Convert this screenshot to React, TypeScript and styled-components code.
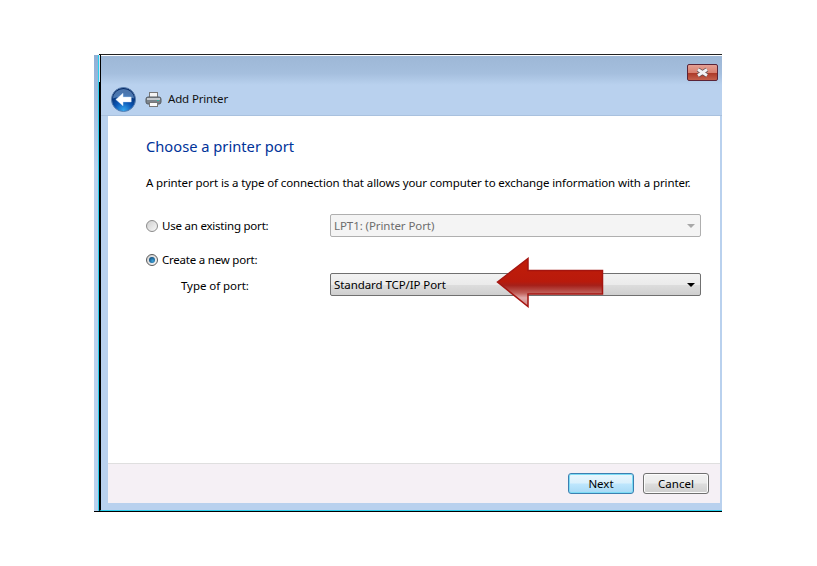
import React from "react";
import styled, { createGlobalStyle } from "styled-components";

const Global = createGlobalStyle`
  html, body { margin: 0; padding: 0; background: #fff; }
  body { font-family: "Noto Sans", "Open Sans", sans-serif; font-size: 12px; color: #000; }
`;

const Page = styled.div`
  width: 817px;
  height: 566px;
  padding: 54px 0 0 94px;
  box-sizing: border-box;
  background: #fff;
  overflow: hidden;
`;

const Frame = styled.div`
  position: relative;
  display: flex;
  width: 628px;
  height: 458px;
  border-bottom: 1px solid #000;
  box-sizing: border-box;
`;

const Strip = styled.div`
  width: 5px;
  margin-top: 1px;
  box-sizing: border-box;
  background: linear-gradient(#8fb0d6, #b9d1ee 25%);
  border-right: 1px solid #2bd0ee;
`;

const Window = styled.div`
  position: relative;
  flex: 1;
  display: flex;
  flex-direction: column;
  border-left: 2px solid #000;
  border-top: 1px solid #222;
  border-bottom: 1px solid #2bd0ee;
  background: #b9d1ee;
  box-sizing: border-box;
  &::before {
    content: "";
    position: absolute;
    left: -2px;
    top: 0;
    width: 1px;
    height: 27px;
    background: #d8e4f2;
  }
`;

const Caption = styled.div`
  display: flex;
  justify-content: flex-end;
  height: 30px;
  padding: 8px 4px 0 0;
  box-sizing: border-box;
  border-top: 1px solid #fff;
  background: linear-gradient(#9db7d6, #a5bfde 60%, #b9d1ee);
`;

const CloseButton = styled.div`
  display: flex;
  align-items: center;
  justify-content: center;
  width: 31px;
  height: 17px;
  box-sizing: border-box;
  border: 1px solid #5a2438;
  border-radius: 2px;
  background: linear-gradient(#e4a094, #d8806f 50%, #ad3a28 56%, #c4604c);
`;

const NavBar = styled.div`
  display: flex;
  align-items: center;
  height: 31px;
  padding: 0 0 2px 10px;
  box-sizing: border-box;
  border-bottom: 1px solid #a9c1de;
`;

const BackIcon = styled.svg`
  width: 25px;
  height: 25px;
  margin-right: 9px;
`;

const PrinterIcon = styled.svg`
  width: 17px;
  height: 17px;
  margin-right: 6px;
`;

const NavTitle = styled.span`
  padding-bottom: 1px;
  font-size: 11.5px;
  letter-spacing: -0.15px;
  color: #111;
`;

const Body = styled.div`
  flex: 1;
  display: flex;
  flex-direction: column;
  margin: 0 2px 7px 7px;
  background: #fff;
`;

const Content = styled.div`
  flex: 1;
  padding: 19px 19px 0 38px;
`;

const Heading = styled.h1`
  margin: 0 0 18px;
  font-size: 14.7px;
  line-height: 22px;
  font-weight: 400;
  color: #003399;
`;

const Intro = styled.p`
  margin: 0 0 23px;
  font-size: 11.5px;
  line-height: 16px;
  letter-spacing: -0.11px;
  white-space: nowrap;
`;

const Row = styled.div<{ $mb: number }>`
  display: flex;
  align-items: center;
  height: 23px;
  margin-bottom: ${(p) => p.$mb}px;
`;

const RadioLabel = styled.label`
  display: flex;
  align-items: center;
  gap: 4px;
  width: 184px;
  font-size: 11.5px;
  line-height: 16px;
  letter-spacing: -0.22px;
`;

const Radio = styled.span<{ $on?: boolean }>`
  display: flex;
  align-items: center;
  justify-content: center;
  width: 12px;
  height: 12px;
  box-sizing: border-box;
  border: 1px solid ${(p) => (p.$on ? "#5a5a5a" : "#8b8b8b")};
  border-radius: 50%;
  background: linear-gradient(135deg, #cfcfcf, #f8f8f8);
  &::after {
    content: "";
    display: ${(p) => (p.$on ? "block" : "none")};
    width: 6px;
    height: 6px;
    border-radius: 50%;
    background: radial-gradient(circle at 60% 65%, #3fa3d8, #0f4e80 75%);
  }
`;

const PlainLabel = styled.span`
  width: 149px;
  margin-left: 35px;
  padding-top: 2px;
  font-size: 11.5px;
  line-height: 16px;
  letter-spacing: -0.05px;
`;

const Combo = styled.div<{ $disabled?: boolean }>`
  display: flex;
  flex: 1;
  align-items: center;
  justify-content: space-between;
  height: 23px;
  padding: 0 5px 0 3px;
  box-sizing: border-box;
  border: 1px solid ${(p) => (p.$disabled ? "#afafaf" : "#707070")};
  border-radius: 2px;
  font-size: 11.5px;
  letter-spacing: -0.08px;
  color: ${(p) => (p.$disabled ? "#6d6d6d" : "#000")};
  background: ${(p) =>
    p.$disabled ? "#f4f4f4" : "linear-gradient(#f2f2f2, #ebebeb 50%, #dddddd 52%, #cfcfcf)"};
`;

const Caret = styled.span<{ $disabled?: boolean }>`
  width: 0;
  height: 0;
  border-left: 4px solid transparent;
  border-right: 4px solid transparent;
  border-top: 4px solid ${(p) => (p.$disabled ? "#a8a8a8" : "#000")};
`;

const Footer = styled.div`
  display: flex;
  justify-content: flex-end;
  gap: 9px;
  height: 40px;
  padding: 9px 11px 0 0;
  box-sizing: border-box;
  border-top: 1px solid #dfdfdf;
  background: #f5f0f5;
`;

const Button = styled.div<{ $primary?: boolean }>`
  display: flex;
  align-items: center;
  justify-content: center;
  width: 66px;
  height: 21px;
  box-sizing: border-box;
  border: 1px solid ${(p) => (p.$primary ? "#3c7fb1" : "#707070")};
  border-radius: 3px;
  font-size: 11.5px;
  background: ${(p) =>
    p.$primary
      ? "linear-gradient(#eaf6fd, #d9f0fc 48%, #bee6fd 52%, #a7d9f5)"
      : "linear-gradient(#f2f2f2, #ebebeb 48%, #dddddd 52%, #cfcfcf)"};
  box-shadow: inset 0 0 0 1px ${(p) => (p.$primary ? "#7ddcf5" : "#fcfcfc")};
`;

const Arrow = styled.svg`
  position: absolute;
  left: 402px;
  top: 203px;
  width: 108px;
  height: 51px;
`;

export default function App() {
  return (
    <Page>
      <Global />
      <Frame>
        <Strip />
        <Window>
          <Caption>
            <CloseButton>
              <svg width="17" height="11" viewBox="0 0 17 11">
                <path d="M4 2.5 L13 8.5 M13 2.5 L4 8.5" stroke="#5a4a4e" strokeWidth="4.4" fill="none" />
                <path d="M4 2.5 L13 8.5 M13 2.5 L4 8.5" stroke="#f2f2f4" strokeWidth="2.8" fill="none" />
              </svg>
            </CloseButton>
          </Caption>
          <NavBar>
            <BackIcon viewBox="0 0 26 26">
              <defs>
                <radialGradient id="bk" cx="50%" cy="95%" r="75%">
                  <stop offset="0" stopColor="#35a8f0" />
                  <stop offset="0.5" stopColor="#0a55b4" />
                  <stop offset="1" stopColor="#062a66" />
                </radialGradient>
              </defs>
              <circle cx="13" cy="13" r="12.5" fill="url(#bk)" stroke="#5a7fb0" strokeWidth="1" />
              <path d="M2 12a11 10 0 0 1 22 0c-6-2-16-2-22 0z" fill="#7aa8dc" opacity="0.6" />
              <path d="M5 13 L12.5 6.5 V10.5 H21 V15.5 H12.5 V19.5 Z" fill="#fff" stroke="#cfe6ff" strokeOpacity="0.5" strokeWidth="1" />
            </BackIcon>
            <PrinterIcon viewBox="0 0 17 17">
              <rect x="4.5" y="1.5" width="8" height="5" fill="#f4f4f4" stroke="#777" />
              <rect x="1" y="6" width="15" height="7" rx="2" fill="#7b838b" stroke="#565c62" />
              <rect x="2" y="7" width="13" height="2" fill="#c4c9ce" />
              <rect x="4.5" y="11.5" width="8" height="4" fill="#fbfbfb" stroke="#777" />
              <rect x="12" y="9" width="2" height="1" fill="#2fb7a5" />
            </PrinterIcon>
            <NavTitle>Add Printer</NavTitle>
          </NavBar>
          <Body>
            <Content>
              <Heading>Choose a printer port</Heading>
              <Intro>A printer port is a type of connection that allows your computer to exchange information with a printer.</Intro>
              <Row $mb={11}>
                <RadioLabel>
                  <Radio />
                  Use an existing port:
                </RadioLabel>
                <Combo $disabled>
                  LPT1: (Printer Port)
                  <Caret $disabled />
                </Combo>
              </Row>
              <Row $mb={2}>
                <RadioLabel>
                  <Radio $on />
                  Create a new port:
                </RadioLabel>
              </Row>
              <Row $mb={0}>
                <PlainLabel>Type of port:</PlainLabel>
                <Combo>
                  Standard TCP/IP Port
                  <Caret />
                </Combo>
              </Row>
            </Content>
            <Footer>
              <Button $primary>Next</Button>
              <Button>Cancel</Button>
            </Footer>
          </Body>
        </Window>
        <Arrow viewBox="0 0 108 51">
          <defs>
            <linearGradient id="ar" x1="0" y1="0" x2="0" y2="1">
              <stop offset="0" stopColor="#c21d08" />
              <stop offset="0.48" stopColor="#b81a0c" />
              <stop offset="0.56" stopColor="#a5201a" />
              <stop offset="0.72" stopColor="#c0605a" />
              <stop offset="0.82" stopColor="#e0aaaa" />
              <stop offset="1" stopColor="#d08080" />
            </linearGradient>
          </defs>
          <path d="M1.5 25 L32 1.5 V13.5 H106.5 V37 H32 V49.5 Z" fill="url(#ar)" stroke="#a51510" strokeWidth="1.5" />
        </Arrow>
      </Frame>
    </Page>
  );
}
